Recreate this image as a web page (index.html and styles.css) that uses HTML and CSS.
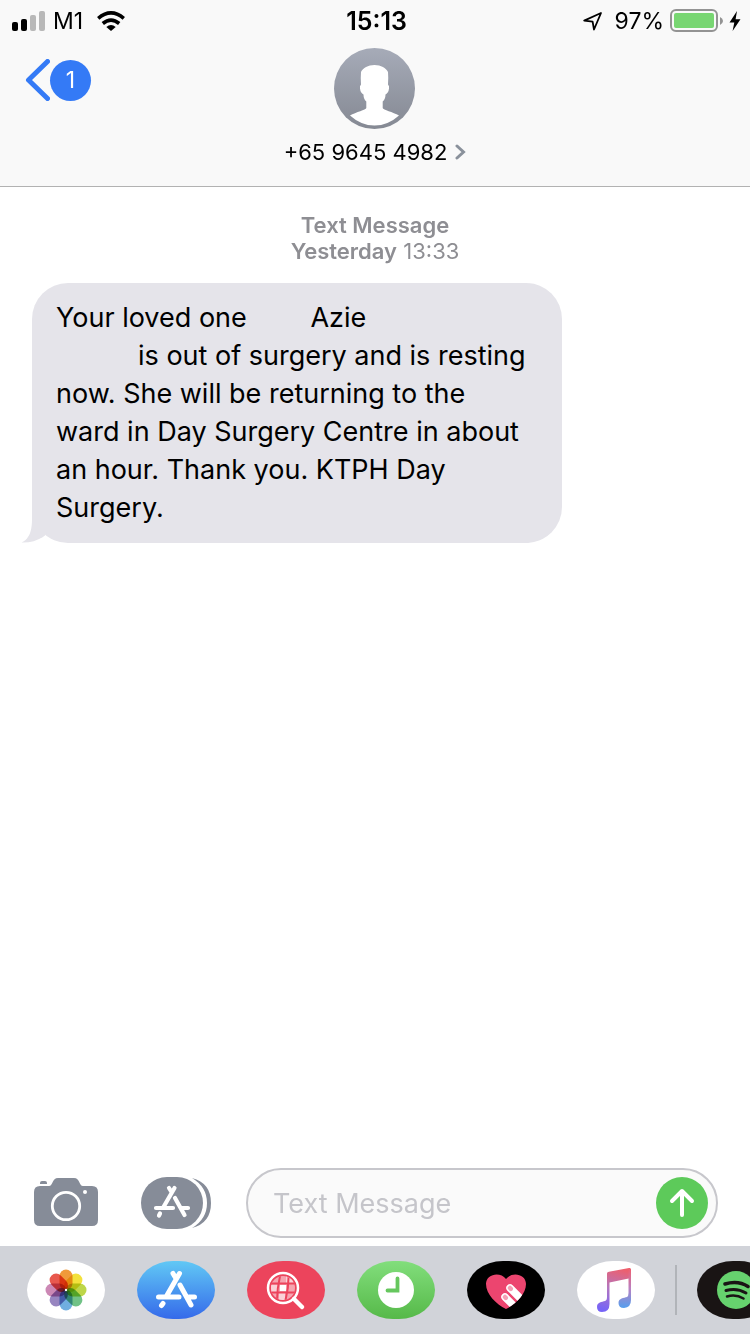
FILE: index.html
```html
<!DOCTYPE html>
<html lang="en">
<head>
<meta charset="utf-8">
<meta name="viewport" content="width=device-width, initial-scale=1">
<title>Messages</title>
<link rel="stylesheet" href="styles.css">
</head>
<body>
<header class="header">
  <div class="status">
    <div class="status-side">
      <svg width="34" height="20" viewBox="0 0 34 20" aria-label="Signal"><rect x="0" y="11" width="6" height="9" rx="2"/><rect x="9" y="8" width="6" height="12" rx="2"/><rect x="18" y="4" width="6" height="16" rx="2" fill="#b8b8b8"/><rect x="27" y="0" width="6" height="20" rx="2" fill="#b8b8b8"/></svg>
      <span class="carrier">M1</span>
      <svg class="wifi" width="28" height="20" viewBox="0 0 28 20" aria-label="Wi-Fi"><g fill="none" stroke="#000" stroke-width="3.600"><path d="M1.200 7.300Q14-3.500 26.800 7.300"/><path d="M5.800 12.500Q14 5.700 22.200 12.500"/></g><path d="M9.300 16Q14 12 18.700 16L14 20Z"/></svg>
    </div>
    <time class="clock">15:13</time>
    <div class="status-side status-right">
      <svg class="locate" width="20" height="20" viewBox="0 0 20 20" aria-label="Location"><path d="M18 2L1.200 9.600L9.600 10.600L11 18.500Z" fill="none" stroke="#000" stroke-width="1.800" stroke-linejoin="round"/></svg>
      <span>97%</span>
      <svg class="battery" width="53" height="24" viewBox="0 0 53 24" aria-label="Charging"><rect x="1" y="1" width="46" height="21" rx="5" fill="none" stroke="#939393" stroke-width="2"/><rect x="4" y="4" width="40" height="15" rx="2" fill="#78d672"/><path d="M50 8Q53 9.500 53 12T50 16Z" fill="#939393"/></svg>
      <svg width="12" height="20" viewBox="0 0 12 20" aria-hidden="true"><path d="M8 0L.5 11.500H5.300L3.600 20L11.500 8.200H6.600Z"/></svg>
    </div>
  </div>
  <div class="nav">
    <button class="back" aria-label="Back, 1 unread">
      <svg width="25" height="42" viewBox="0 0 25 42" aria-hidden="true"><path d="M22.500 2.500L3.500 21L22.500 39.500" fill="none" stroke="#347af6" stroke-width="5" stroke-linecap="round" stroke-linejoin="round"/></svg>
      <span class="unread">1</span>
    </button>
    <button class="contact">
      <svg width="81" height="81" viewBox="0 0 81 81" aria-hidden="true">
        <defs><linearGradient id="gray" x2="0" y2="1"><stop stop-color="#a6abb8"/><stop offset="1" stop-color="#858993"/></linearGradient></defs>
        <circle cx="40.500" cy="40.500" r="40.500" fill="url(#gray)"/>
        <path d="M40.500 17C47 17 52 20 54 24Q54.500 30 54 36.500Q55.500 38 55 40.500Q54.500 45 51.500 46.500Q51.500 51 48.700 53.500V60C49 62 59 64 65 67.500Q54 77.500 40.500 77.500T16 67.500C22 64 32 62 32.300 60V53.500Q29.500 51 29.500 46.500Q26.500 45 26 40.500Q25.500 38 27 36.500Q26.500 30 27 24C29 20 34 17 40.500 17Z" fill="#fff"/>
      </svg>
      <span class="number">+65 9645 4982
        <svg width="11" height="16" viewBox="0 0 11 16" aria-hidden="true"><path d="M2 2L8.500 8L2 14" fill="none" stroke="#8a919b" stroke-width="3" stroke-linecap="round"/></svg>
      </span>
    </button>
  </div>
</header>

<main class="thread">
  <p class="stamp"><strong>Text Message</strong><br><strong>Yesterday</strong> 13:33</p>
  <div class="bubble">
    <svg class="tail" width="32" height="38" viewBox="0 0 32 38" aria-hidden="true"><path d="M12 0V14C12 27 9 34 1.500 37.500Q15 38 25 30.500L30 20Z" fill="#e5e4ea"/></svg>
    <p class="message">Your loved one <span class="gap-name"></span>Azie<br><span class="gap-line"></span>is out of surgery and is resting now. She will be returning to the ward in Day Surgery Centre in about an hour. Thank you. KTPH Day Surgery.</p>
  </div>
</main>

<form class="composer">
  <button class="tool" type="button" aria-label="Camera">
    <svg width="64" height="50" viewBox="0 0 64 50"><path d="M6 6V5Q6 3 8 3H11Q13 3 13 5V6Z" fill="#868c98"/><path d="M6 8H15C19 8 18 0 24 0H40C46 0 45 8 49 8H58Q64 8 64 14V42Q64 48 58 48H6Q0 48 0 42V14Q0 8 6 8Z" fill="#868c98"/><circle cx="32" cy="28" r="13.700" fill="none" stroke="#fff" stroke-width="2.800"/><circle cx="51" cy="14" r="2" fill="#fff"/></svg>
  </button>
  <button class="tool" type="button" aria-label="Apps">
    <svg width="70" height="52" viewBox="0 0 70 52"><path d="M51 1Q70 6 70 26T51 51Q66 42 66 26T51 1Z" fill="#868c98"/><rect width="62" height="52" rx="26" fill="#868c98"/><g stroke="#fff" stroke-width="4.200" stroke-linecap="round" fill="none"><path d="M28 11L30.500 15M33.500 11L22.500 30M34 21L43.500 38M15 31H32M40 31H47M19 36.500L18 38.500"/></g></svg>
  </button>
  <div class="field">
    <input class="entry" type="text" aria-label="Text Message" placeholder="Text Message">
    <button class="send" type="submit" aria-label="Send">
      <svg width="52" height="52" viewBox="0 0 52 52"><path d="M26 38V14M16 24L26 14L36 24" fill="none" stroke="#fff" stroke-width="4" stroke-linecap="round" stroke-linejoin="round"/></svg>
    </button>
  </div>
</form>

<nav class="apps" aria-label="Apps">
  <button class="app photos" aria-label="Photos">
    <svg width="78" height="58" viewBox="0 0 78 58"><g class="petals">
      <rect x="32.500" y="8.500" width="13" height="20.500" rx="6.500" fill="#f09a3a"/>
      <rect x="32.500" y="8.500" width="13" height="20.500" rx="6.500" fill="#f3e13c" transform="rotate(45 39 29)"/>
      <rect x="32.500" y="8.500" width="13" height="20.500" rx="6.500" fill="#bdd649" transform="rotate(90 39 29)"/>
      <rect x="32.500" y="8.500" width="13" height="20.500" rx="6.500" fill="#71c286" transform="rotate(135 39 29)"/>
      <rect x="32.500" y="8.500" width="13" height="20.500" rx="6.500" fill="#70aee0" transform="rotate(180 39 29)"/>
      <rect x="32.500" y="8.500" width="13" height="20.500" rx="6.500" fill="#9785c0" transform="rotate(225 39 29)"/>
      <rect x="32.500" y="8.500" width="13" height="20.500" rx="6.500" fill="#cc88b5" transform="rotate(270 39 29)"/>
      <rect x="32.500" y="8.500" width="13" height="20.500" rx="6.500" fill="#e8584e" transform="rotate(315 39 29)"/>
    </g><circle cx="39" cy="29" r="1.200" fill="#fff"/></svg>
  </button>
  <button class="app store" aria-label="App Store">
    <svg width="78" height="58" viewBox="0 0 78 58"><g stroke="#fff" stroke-width="5" stroke-linecap="round" fill="none"><path d="M36 12.500L39 17.500M42.500 12.500L29 36M43 24L54 44M21.500 36H42M52 36H57.500M26 42.500L24.500 44.500"/></g></svg>
  </button>
  <button class="app search" aria-label="Image search">
    <svg width="78" height="58" viewBox="0 0 78 58"><defs><clipPath id="globe"><circle cx="36" cy="27" r="12"/></clipPath></defs><g clip-path="url(#globe)"><path d="M22 13H50V41H22Z" fill="#f6a4b0"/><path d="M22 24H32V31H22ZM39 13H46V23H39ZM32 32H38V41H32Z" fill="#fad2d8"/><path d="M33 24H39V30H33Z" fill="#fff"/><path d="M22 22.500H50M22 31.500H50M33.500 13Q30 27 30 41M41.500 13Q42 27 38 41" fill="none" stroke="#ec445c" stroke-width="2"/></g><circle cx="36" cy="27" r="15" fill="none" stroke="#fff" stroke-width="2.500"/><path d="M47 38L55 46" stroke="#fff" stroke-width="4.500" stroke-linecap="round"/></svg>
  </button>
  <button class="app recent" aria-label="Recents">
    <svg width="78" height="58" viewBox="0 0 78 58"><circle cx="39" cy="29" r="18" fill="#fff"/><path d="M40.500 17.500V29.500H30.500" fill="none" stroke="#66c75e" stroke-width="3.800" stroke-linecap="round"/></svg>
  </button>
  <button class="app touch" aria-label="Digital Touch">
    <svg width="78" height="58" viewBox="0 0 78 58"><defs><clipPath id="heart"><path d="M39 48C29 43 19 33 19 23C19 13 33 10 39 18C45 10 59 13 59 23C59 33 49 43 39 48Z"/></clipPath></defs><path d="M39 48C29 43 19 33 19 23C19 13 33 10 39 18C45 10 59 13 59 23C59 33 49 43 39 48Z" fill="#ec456f"/><g clip-path="url(#heart)" stroke-linecap="round"><path d="M43 27L60 44M38 36L54 52" stroke="#fff" stroke-width="7.500"/><path d="M43 27L43.800 27.800M38 36L38.800 36.800" stroke="#f4a0b5" stroke-width="4.500"/></g></svg>
  </button>
  <button class="app music" aria-label="Music">
    <svg width="78" height="58" viewBox="0 0 78 58"><defs><linearGradient id="note" x1=".65" y1="0" x2=".45" y2="1"><stop stop-color="#ee5f6c"/><stop offset=".5" stop-color="#b276c0"/><stop offset="1" stop-color="#7764f6"/></linearGradient><linearGradient id="noteb" x2="0" y2="1"><stop stop-color="#ee6070"/><stop offset=".5" stop-color="#b980c2"/><stop offset="1" stop-color="#559fee"/></linearGradient></defs><path d="M30 12.500Q30 11 32 10.700L52 7Q54 6.500 54 8.500V17L32.500 21.500V43Q32.500 51 25 51Q20 51 20 46C20 41 25 41 28 40Q30 39.500 30 36Z" fill="url(#note)"/><path d="M51.500 8H54V39Q54 46.500 47 47Q41.500 47 41.500 42C41.500 37 47 37 50 36Q51.500 35 51.500 32Z" fill="url(#noteb)"/></svg>
  </button>
  <span class="divider"></span>
  <button class="app spotify" aria-label="Spotify">
    <svg width="78" height="58" viewBox="0 0 78 58"><circle cx="39" cy="29" r="19" fill="#66d26e"/><g fill="none" stroke="#191414" stroke-linecap="round"><path d="M28 23Q41 19 51 25.500" stroke-width="3.500"/><path d="M29 29.500Q40 26.500 49 32" stroke-width="3"/><path d="M30 35.500Q39 33 46.500 37.500" stroke-width="2.500"/></g></svg>
  </button>
</nav>
</body>
</html>
```

FILE: styles.css
```css
* { box-sizing: border-box; }
body {
  margin: 0;
  min-height: 100vh;
  display: flex;
  flex-direction: column;
  overflow-x: hidden;
  background: #fff;
  color: #000;
  font-family: Inter, "Liberation Sans", sans-serif;
}
button {
  padding: 0;
  border: 0;
  background: none;
  color: inherit;
  font: inherit;
}
svg { display: block; flex: none; }
.header {
  background: #f9f9f9;
  border-bottom: 1px solid #b2b2b2;
}
.status {
  display: grid;
  grid-template-columns: 1fr auto 1fr;
  align-items: center;
  height: 40px;
  padding: 1px 9px 0 12px;
  font-size: 23px;
}
.status-side { display: flex; align-items: center; }
.status-right { justify-content: flex-end; }
.carrier { margin-left: 7px; }
.wifi { margin-left: 14px; }
.clock { font-size: 25px; font-weight: 600; }
.locate { margin-right: 12px; }
.battery { margin: 0 6px; }
.nav {
  display: grid;
  grid-template-columns: 1fr auto 1fr;
  align-items: start;
  padding: 8px 25px 19px;
}
.back {
  display: flex;
  align-items: center;
  justify-self: start;
  margin-top: 11px;
}
.unread {
  width: 41px;
  height: 41px;
  border-radius: 50%;
  background: #347af6;
  color: #fff;
  font-size: 23px;
  line-height: 40px;
  text-align: center;
}
.contact {
  display: flex;
  flex-direction: column;
  align-items: center;
  gap: 8px;
}
.number {
  display: flex;
  align-items: center;
  gap: 8px;
  font-size: 22px;
  line-height: 30px;
}
.thread { flex: 1; padding: 25px 32px; }
.stamp {
  margin: 0 0 19px;
  color: #8e8e93;
  font-size: 22px;
  line-height: 26px;
  text-align: center;
}
.stamp strong { font-weight: 600; }
.bubble {
  position: relative;
  width: fit-content;
  max-width: 530px;
  padding: 16px 32px 16px 24px;
  border-radius: 36px;
  background: #e5e4ea;
}
.tail { position: absolute; left: -12px; bottom: 0; }
.message {
  margin: 0;
  font-size: 27px;
  line-height: 38px;
}
.gap-name { display: inline-block; width: 56px; }
.gap-line { display: inline-block; width: 82px; }
.composer {
  display: flex;
  align-items: center;
  margin: 0;
  padding: 0 32px 8px 34px;
}
.tool { margin-right: 43px; }
.tool + .tool { margin-right: 35px; }
.field {
  flex: 1;
  min-width: 0;
  display: flex;
  align-items: center;
  height: 70px;
  padding: 0 8px 0 25px;
  border: 2px solid #c7c7cc;
  border-radius: 35px;
  background: #fafafa;
}
.entry {
  flex: 1;
  min-width: 0;
  padding: 0;
  border: 0;
  outline: 0;
  background: none;
  font: 27px Inter, "Liberation Sans", sans-serif;
}
.entry::placeholder { color: #c5c5ca; opacity: 1; }
.send { border-radius: 50%; background: #5dca5a; }
.apps {
  display: flex;
  align-items: center;
  gap: 32px;
  height: 88px;
  padding-left: 27px;
  overflow: hidden;
  background: #d1d3d9;
}
.app {
  flex: none;
  width: 78px;
  height: 58px;
  border-radius: 36px / 29px;
  overflow: hidden;
}
.photos, .music { background: #fff; }
.petals { isolation: isolate; }
.petals rect { mix-blend-mode: multiply; }
.store { background: linear-gradient(#61c8f5, #356aea); }
.search { background: #ec445c; }
.recent { background: linear-gradient(#82de7c, #56b949); }
.touch { background: #000; }
.spotify { background: #191414; }
.divider {
  flex: none;
  width: 2px;
  height: 50px;
  margin: 0 -12px;
  background: #b1b4b9;
}
```
